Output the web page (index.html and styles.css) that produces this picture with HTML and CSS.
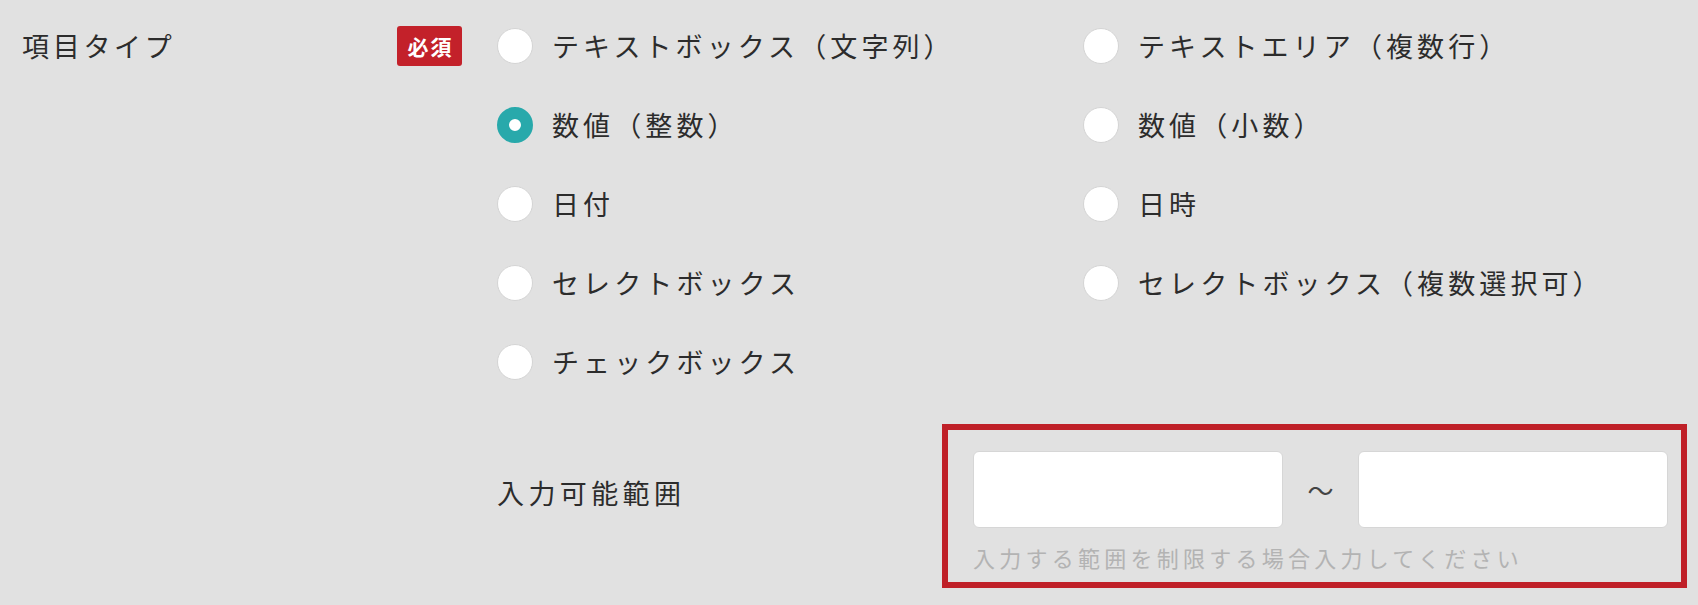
FILE: index.html
```html
<!DOCTYPE html>
<html lang="ja">
<head>
<meta charset="utf-8">
<title>項目タイプ</title>
<link rel="stylesheet" href="styles.css">
</head>
<body>
<div class="field">
  <div class="field-head">
    <span class="field-label">項目タイプ</span>
    <span class="badge">必須</span>
  </div>
  <div class="field-body">
    <div class="options">
      <label class="option"><span class="radio"></span><span class="opt-text">テキストボックス（文字列）</span></label>
      <label class="option"><span class="radio"></span><span class="opt-text">テキストエリア（複数行）</span></label>
      <label class="option"><span class="radio checked"></span><span class="opt-text">数値（整数）</span></label>
      <label class="option"><span class="radio"></span><span class="opt-text">数値（小数）</span></label>
      <label class="option"><span class="radio"></span><span class="opt-text">日付</span></label>
      <label class="option"><span class="radio"></span><span class="opt-text">日時</span></label>
      <label class="option"><span class="radio"></span><span class="opt-text">セレクトボックス</span></label>
      <label class="option"><span class="radio"></span><span class="opt-text">セレクトボックス（複数選択可）</span></label>
      <label class="option"><span class="radio"></span><span class="opt-text">チェックボックス</span></label>
    </div>
    <div class="range">
      <div class="range-label">入力可能範囲</div>
      <div class="range-box">
        <div class="range-inputs">
          <div class="input"></div>
          <span class="tilde">〜</span>
          <div class="input"></div>
        </div>
        <div class="hint">入力する範囲を制限する場合入力してください</div>
      </div>
    </div>
  </div>
</div>
</body>
</html>
```

FILE: styles.css
```css
* { box-sizing: border-box; }
html, body {
  margin: 0;
  padding: 0;
  background: #e1e1e1;
}
body {
  font-family: "Noto Sans CJK JP", "Noto Sans", sans-serif;
  color: #2c2c2c;
  width: 1698px;
  height: 605px;
  overflow: hidden;
}
.field {
  display: flex;
  align-items: flex-start;
  padding: 28px 0 0 22px;
}
.field-head {
  width: 440px;
  height: 36px;
  display: flex;
  align-items: center;
  justify-content: space-between;
  flex-shrink: 0;
}
.field-label {
  font-size: 27px;
  letter-spacing: 3.7px;
  line-height: 36px;
}
.badge {
  width: 65px;
  height: 40px;
  background: #c3212a;
  color: #ffffff;
  border-radius: 3px;
  font-size: 21px;
  font-weight: 700;
  letter-spacing: 2px;
  display: flex;
  align-items: center;
  justify-content: center;
  padding-left: 2px;
}
.field-body {
  margin-left: 35px;
}
.options {
  display: grid;
  grid-template-columns: 586px auto;
  row-gap: 43px;
}
.option {
  display: flex;
  align-items: center;
  gap: 19px;
  height: 36px;
}
.radio {
  width: 36px;
  height: 36px;
  border-radius: 50%;
  background: #ffffff;
  border: 1px solid #d4d4d4;
  flex-shrink: 0;
}
.radio.checked {
  border: 12px solid #28a9ab;
}
.opt-text {
  font-size: 27px;
  letter-spacing: 4.1px;
  line-height: 36px;
  white-space: nowrap;
}
.range {
  display: flex;
  align-items: flex-start;
  margin-top: 44px;
}
.range-label {
  width: 445px;
  flex-shrink: 0;
  margin-top: 51px;
  font-size: 27px;
  letter-spacing: 4.4px;
  line-height: 36px;
}
.range-box {
  width: 745px;
  border: 6px solid #bf2028;
  padding: 21px 13px 10px 25px;
}
.range-inputs {
  display: flex;
  align-items: center;
}
.input {
  width: 310px;
  height: 77px;
  background: #ffffff;
  border: 1px solid #d6d6d6;
  border-radius: 6px;
}
.tilde {
  width: 75px;
  text-align: center;
  font-size: 26px;
  color: #444444;
}
.hint {
  margin-top: 14px;
  font-size: 22px;
  line-height: 30px;
  letter-spacing: 4.25px;
  color: #b3b3b3;
  white-space: nowrap;
}
```
